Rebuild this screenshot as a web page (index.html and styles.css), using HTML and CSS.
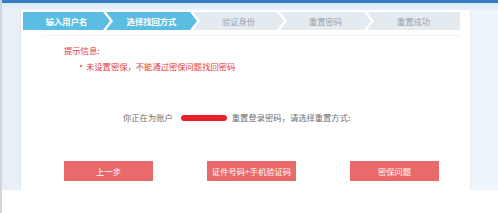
FILE: index.html
```html
<!DOCTYPE html>
<html lang="zh-CN">
<head>
<meta charset="utf-8">
<title>找回密码</title>
<link rel="stylesheet" href="styles.css">
</head>
<body>
<div class="frame">
  <div class="topbar"></div>
  <div class="main">
    <div class="leftstrip"></div>
    <div class="panel">
      <div class="steps">
        <div class="step first active">输入用户名</div>
        <div class="step active">选择找回方式</div>
        <div class="step">验证身份</div>
        <div class="step">重置密码</div>
        <div class="step last">重置成功</div>
      </div>
      <div class="content">
        <div class="tip-title">提示信息:</div>
        <ul class="tip-list">
          <li>未设置密保，不能通过密保问题找回密码</li>
        </ul>
        <p class="account">你正在为账户<span class="blob"></span>重置登录密码，请选择重置方式:</p>
        <div class="buttons">
          <button class="btn">上一步</button>
          <button class="btn">证件号码+手机验证码</button>
          <button class="btn">密保问题</button>
        </div>
      </div>
    </div>
    <div class="rightstrip"></div>
  </div>
</div>
</body>
</html>
```

FILE: styles.css
```css
* { box-sizing: border-box; }
html, body { margin: 0; padding: 0; background: #fff; }
body {
  font-family: "Noto Sans CJK SC", "Liberation Sans", sans-serif;
  font-size: 8.3px;
  width: 498px;
  height: 213px;
  overflow: hidden;
}
.frame {
  height: 213px;
  border-left: 2px solid #cfd5df;
}
.topbar {
  height: 3px;
  background: #3a7cc0;
}
.main {
  display: flex;
  height: 187px;
  background: linear-gradient(#dbeaf8, #eef5fc 10px, #f1f7fd);
}
.leftstrip {
  width: 19px;
  margin-top: 7px;
  background: #e9eff7;
  border-right: 1px solid #e2e8f1;
}
.panel {
  width: 449px;
  margin-top: 7px;
  background: #fff;
  padding: 2px 0 0 2px;
  display: flex;
  flex-direction: column;
}
.rightstrip {
  flex: 1;
  margin-top: 7px;
  background: #edf4fc;
  border-left: 1px solid #e6edf5;
}
.steps {
  display: flex;
  width: 437px;
  height: 18px;
}
.step {
  width: 91px;
  height: 18px;
  line-height: 18px;
  text-align: center;
  color: #9aa3aa;
  background: #e3eaf0;
  margin-left: -4px;
  clip-path: polygon(0 0, calc(100% - 7px) 0, 100% 50%, calc(100% - 7px) 100%, 0 100%, 7px 50%);
}
.step.first {
  margin-left: 0;
  width: 87px;
  clip-path: polygon(0 0, calc(100% - 7px) 0, 100% 50%, calc(100% - 7px) 100%, 0 100%);
}
.step.last {
  flex: 1;
  clip-path: polygon(0 0, 100% 0, 100% 100%, 0 100%, 7px 50%);
}
.step.active {
  background: #5bbde2;
  color: #fff;
  font-weight: bold;
}
.content {
  margin: 5px 10px 0 20px;
  border-top: 1px solid #f1f3f5;
  padding-top: 6px;
  flex: 1;
}
.tip-title {
  color: #e8393e;
  line-height: 16px;
  padding-left: 21px;
}
.tip-list {
  list-style: none;
  margin: 0;
  padding: 0 0 0 43px;
  color: #e8393e;
  line-height: 16px;
}
.tip-list li { position: relative; }
.tip-list li::before {
  content: "";
  position: absolute;
  left: -6px;
  top: 7px;
  width: 2px;
  height: 2px;
  border-radius: 50%;
  background: #e8393e;
}
.account {
  margin: 35px 0 0 80px;
  line-height: 16px;
  color: #6f6f6f;
}
.blob {
  display: inline-block;
  width: 46px;
  height: 6px;
  border-radius: 3px;
  background: #e8202a;
  margin: 0 5px 0 8px;
  vertical-align: 0px;
}
.buttons {
  display: flex;
  gap: 54px;
  margin: 36px 0 0 21px;
}
.btn {
  width: 89px;
  height: 20px;
  padding: 0;
  border: 0;
  background: #e96a6a;
  color: #fff;
  font-family: inherit;
  font-size: 8.3px;
  line-height: 20px;
  text-align: center;
}
```
